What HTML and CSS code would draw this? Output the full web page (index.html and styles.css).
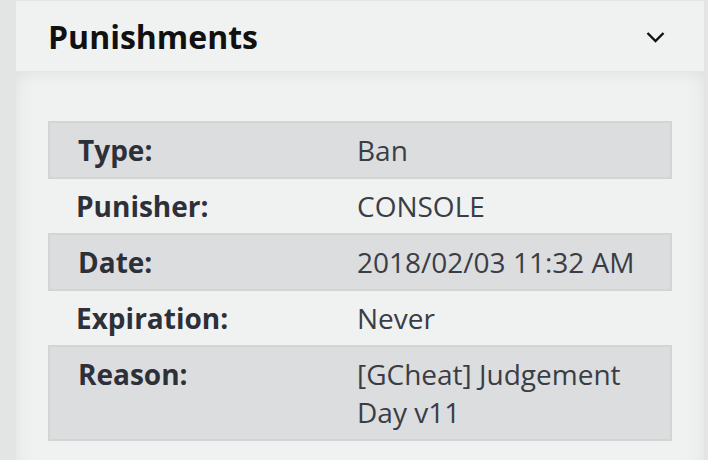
FILE: index.html
```html
<!DOCTYPE html>
<html lang="en">
<head>
    <meta charset="UTF-8">
    <title>Punishments</title>
    <meta name="viewport" content="width=device-width, initial-scale=1.0">
    <link rel="stylesheet" href="styles.css">
</head>
<body>
<div class="card">
    <div class="card-header">
        <h2>Punishments</h2>
        <svg class="chevron" width="19" height="12" viewBox="0 0 19 12">
            <path d="M1.5 2 L9.5 10 L17.5 2" fill="none" stroke="#111" stroke-width="2.4"/>
        </svg>
    </div>
    <div class="card-body">
        <div class="details">
            <div class="row striped">
                <div class="label">Type:</div>
                <div class="value">Ban</div>
            </div>
            <div class="row">
                <div class="label">Punisher:</div>
                <div class="value">CONSOLE</div>
            </div>
            <div class="row striped">
                <div class="label">Date:</div>
                <div class="value">2018/02/03 11:32 AM</div>
            </div>
            <div class="row">
                <div class="label">Expiration:</div>
                <div class="value">Never</div>
            </div>
            <div class="row striped">
                <div class="label">Reason:</div>
                <div class="value">[GCheat] Judgement Day v11</div>
            </div>
        </div>
    </div>
</div>
</body>
</html>
```

FILE: styles.css
```css
body {
    margin: 0;
    padding: 1px 4px 0 16px;
    background-color: #e3e4e4;
    font-family: "Open Sans", sans-serif;
    height: 100vh;
    box-sizing: border-box;
    overflow: hidden;
}
.card {
    display: flex;
    flex-direction: column;
    background-color: #f0f2f1;
    height: 100%;
}
.card-header {
    display: flex;
    justify-content: space-between;
    align-items: center;
    height: 70px;
    padding: 0 39px 0 32px;
    border-bottom: 1px solid #e4e6e5;
}
.card-header h2 {
    margin: 0;
    font-size: 32px;
    font-weight: 700;
    color: #111;
}
.chevron {
    display: block;
    margin-top: 2px;
}
.card-body {
    flex: 1;
    padding: 49px 32px 0 32px;
    box-shadow: inset 0 12px 18px -10px rgba(0, 0, 0, 0.06), inset 18px 0 20px -16px rgba(0, 0, 0, 0.05), inset -18px 0 20px -16px rgba(0, 0, 0, 0.05);
}
.row {
    display: flex;
    padding: 8px 0;
    font-size: 28px;
    line-height: 38px;
}
.striped {
    background-color: #dcdddf;
    border: 2px solid #d3d5d5;
}
.label {
    width: 279px;
    padding-left: 28px;
    flex-shrink: 0;
    font-weight: 700;
    color: #2e3039;
}
.row:not(.striped) .label {
    width: 281px;
}
.value {
    color: #3a3d46;
    width: 280px;
}
```
